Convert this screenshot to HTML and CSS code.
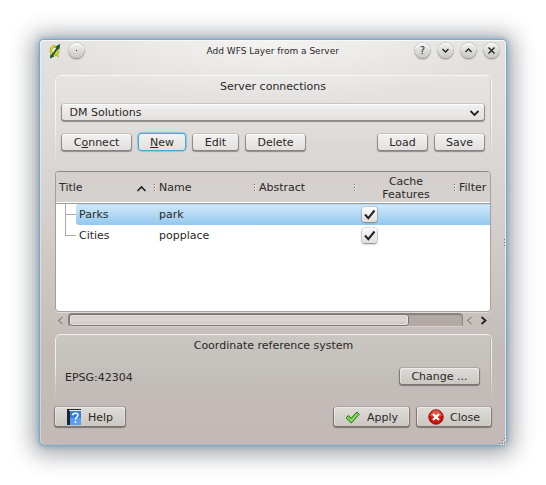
FILE: index.html
```html
<!DOCTYPE html>
<html lang="en">
<head>
<meta charset="utf-8">
<title>Add WFS Layer from a Server</title>
<link rel="stylesheet" href="styles.css">
</head>
<body>
<main class="window">
  <header class="titlebar">
    <svg class="app-icon" width="12" height="16" viewBox="0 0 12 16"><ellipse cx="5.500" cy="7.800" rx="3.600" ry="4.300" fill="#f3f2d8" stroke="#8b8a16" stroke-width="2.400"/><ellipse cx="5.500" cy="7.800" rx="3.600" ry="4.300" fill="none" stroke="#e2e12c" stroke-width="1.400"/><path d="M6.500 10l3 4" stroke="#c8c51e" stroke-width="2"/><path d="M1 15.500l.5-4 1 .4L7.700 4.600 6 4.200 11 .8l-.5 5.400-1.200-.6-5.200 7.200 1 .7z" fill="#12561f"/></svg>
    <span class="round"><i class="dot"></i></span>
    <h1>Add WFS Layer from a Server</h1>
    <span class="round"><span class="question">?</span></span>
    <span class="round"><svg width="15" height="15" viewBox="0 0 15 15"><path d="M4.500 6l3 3 3-3"/></svg></span>
    <span class="round"><svg width="15" height="15" viewBox="0 0 15 15"><path d="M4.500 9l3-3 3 3"/></svg></span>
    <span class="round"><svg width="15" height="15" viewBox="0 0 15 15"><path d="M4.500 4.500l6 6M10.500 4.500l-6 6"/></svg></span>
  </header>

  <section class="group connections">
    <h2>Server connections</h2>
    <div class="combo">DM Solutions<svg width="11" height="8" viewBox="0 0 11 8"><path d="M1.500 2l4 4 4-4" fill="none" stroke="#222" stroke-width="1.800"/></svg></div>
    <div class="row">
      <button class="btn connect">C<u>o</u>nnect</button>
      <button class="btn new"><u>N</u>ew</button>
      <button class="btn edit">Edit</button>
      <button class="btn delete">Delete</button>
      <span class="space"></span>
      <button class="btn load">Load</button>
      <button class="btn save">Save</button>
    </div>
  </section>

  <section class="table">
    <div class="cols head">
      <div class="sep">Title<svg class="sort" width="11" height="7" viewBox="0 0 11 7"><path d="M1.500 6l4-4 4 4" fill="none" stroke="#222" stroke-width="1.600"/></svg></div>
      <div class="sep">Name</div>
      <div class="sep">Abstract</div>
      <div class="sep center">Cache<br>Features</div>
      <div>Filter</div>
    </div>
    <div class="cols item selected">
      <div><i class="branch"></i>Parks</div><div>park</div><div></div>
      <div><span class="check"><svg width="15" height="15" viewBox="0 0 15 15"><path d="M3 7.500l3.300 3.600L12.500 3.500" fill="none" stroke="#222" stroke-width="2"/></svg></span></div><div></div>
    </div>
    <div class="cols item">
      <div><i class="branch last"></i>Cities</div><div>popplace</div><div></div>
      <div><span class="check"><svg width="15" height="15" viewBox="0 0 15 15"><path d="M3 7.500l3.300 3.600L12.500 3.500" fill="none" stroke="#222" stroke-width="2"/></svg></span></div><div></div>
    </div>
  </section>

  <div class="scroll">
    <svg class="arrow dim" width="7" height="9" viewBox="0 0 7 9"><path d="M5.500 1l-4 3.500 4 3.500"/></svg>
    <div class="track"><div class="thumb"></div></div>
    <svg class="arrow dim" width="7" height="9" viewBox="0 0 7 9"><path d="M5.500 1l-4 3.500 4 3.500"/></svg>
    <svg class="arrow" width="7" height="9" viewBox="0 0 7 9"><path d="M1.500 1l4 3.500-4 3.500"/></svg>
  </div>

  <section class="group crs">
    <h2>Coordinate reference system</h2>
    <div class="row"><span>EPSG:42304</span><span class="space"></span><button class="btn change">Change ...</button></div>
  </section>

  <footer class="row">
    <button class="btn big help"><svg width="14" height="16" viewBox="0 0 14 16"><path fill="#172536" d="M0 0h14v16H0z"/><path fill="#3a7fdc" d="M3 2h11v14H3z"/><path fill="#75b0f5" d="M3 9h11v7H3z" opacity=".6"/><path stroke="#e8f0fa" d="M2 1.500h12"/><path d="M5.700 6.300C5.700 3.500 11 3.500 11 6.300c0 2-2.500 2-2.500 4.200M8.500 12v2" fill="none" stroke="#fff" stroke-width="1.500"/></svg>Help</button>
    <span class="space"></span>
    <button class="btn big apply"><svg width="15" height="13" viewBox="0 0 15 13"><path d="M1 6.800l2.600-2.300 2.400 2.800L12 1l2.300 2.200L6.400 12z" fill="#71c944" stroke="#2c7720" stroke-linejoin="round"/><path d="M3 6.500l3.200 3.500L12.500 3" fill="none" stroke="#a5e67b"/></svg>Apply</button>
    <button class="btn big close"><svg width="16" height="16" viewBox="0 0 16 16"><circle cx="8" cy="8" r="7.200" fill="#cb1708" stroke="#8d0904"/><path d="M2 7a6 6 0 0 1 12 0q-6 2-12 0" fill="#ec796b" opacity=".6"/><path d="M5 5l6 6M11 5l-6 6" stroke="#fff" stroke-width="2.400"/></svg>Close</button>
  </footer>
  <i class="side-grip"></i>
  <svg class="corner-grip" width="7" height="7" viewBox="0 0 7 7"><path d="M5 0h1v1H5zM3 2h1v1H3zM5 4h1v1H5zM0 5h1v1H0zM3 5h1v1H3z" fill="#7d7472"/><path d="M6 1h1v1H6zM4 3h1v1H4zM6 5h1v1H6zM1 6h1v1H1zM4 6h1v1H4z" fill="#eee"/></svg>
</main>
</body>
</html>
```
FILE: styles.css
```css
* { box-sizing: border-box; }
body {
  margin: 0;
  padding: 40px;
  background: #fff;
  color: #2b2827;
  font: 11px/13px "DejaVu Sans", sans-serif;
}
h1, h2 { margin: 0; font-size: 11px; font-weight: normal; text-align: center; }
svg { display: block; flex: none; }
.window {
  position: relative;
  width: 466px;
  height: 405px;
  padding: 0 15px;
  border-radius: 4px 4px 5px 5px;
  background: radial-gradient(ellipse 230px 62px at 50% 0, rgba(255,255,255,.6), rgba(255,255,255,0)), linear-gradient(#e4e2e0, #dedbd9 20%, #d4cfcc 45%, #c4bcb9 76%, #c3bab7);
  box-shadow: inset 0 1px #f8f8f7, inset 1px 0 rgba(255,255,255,.35), inset -1px 0 rgba(255,255,255,.55), 0 0 1px 1px #75abc7, 0 0 5px 2px rgba(100,150,180,.5), 0 2px 22px 8px rgba(70,75,85,.48);
}
.titlebar { display: flex; height: 35px; padding: 3px 0 0; margin: 0 -8px 0 -7px; align-items: flex-start; }
.app-icon { margin: 0 8px 0 1px; }
.round {
  width: 15px; height: 15px;
  display: flex; align-items: center; justify-content: center;
  border-radius: 50%;
  background: linear-gradient(#f2f2f1, #c9c7c5);
  box-shadow: 0 0 0 .5px #aaa, 0 1px 2px #777, inset 0 1px #fff;
}
.round svg { fill: none; stroke: #222; stroke-width: 1.4; }
.round + .round { margin-left: 8px; }
.question { font-size: 10px; line-height: 15px; }
.dot { width: 1px; height: 1px; background: #222; }
.titlebar h1 { flex: 1; font-size: 9px; line-height: 16px; margin-left: 122.500px; text-align: left; white-space: nowrap; }

.group {
  position: relative;
  width: 437px;
  border-radius: 5px;
  background: linear-gradient(rgba(255,255,255,.16), rgba(255,255,255,0));
}
.group::before {
  content: "";
  position: absolute;
  inset: 0;
  border: 1px solid rgba(255,255,255,.7);
  border-bottom: 0;
  border-radius: 5px 5px 0 0;
  box-shadow: -1px 0 rgba(80,70,65,.28), 0 -1px rgba(80,70,65,.1), inset -1px 0 rgba(80,70,65,.15);
  -webkit-mask-image: linear-gradient(#000 50%, transparent);
  mask-image: linear-gradient(#000 50%, transparent);
  pointer-events: none;
}
.group h2 { padding-left: 1px; }
.connections { height: 90px; padding: 5px 8px 0 7px; }
.connections h2 { padding-left: 0; }
.combo {
  display: flex; align-items: center; justify-content: space-between;
  height: 16px; margin: 11px 0 14px; padding: 1px 4px 0 7.500px;
}
.row { display: flex; align-items: center; }
.space { flex: 1; }
.btn, .combo {
  border: 0;
  border-radius: 3px;
  color: inherit;
  background: linear-gradient(#f3f2f1, #e2e0de);
  box-shadow: inset 0 1px rgba(255,255,255,.9), 0 0 0 1px rgba(115,108,105,.15), 0 1px 1px .5px rgba(80,72,70,.55);
}
.btn { height: 16px; padding: 0; font: inherit; margin-right: 8px; }
.connect { width: 69px; }
.new { width: 46px; box-shadow: 0 0 0 1px #43a9d9, 0 0 1px 2px rgba(100,180,220,.6); }
.edit { width: 45px; }
.delete { width: 59px; }
.load { width: 49px; }
.save { width: 49px; margin-right: 0; }

.table {
  height: 141px;
  margin-top: 6px;
  width: 436px;
  padding: 1px 0 0 1px;
  overflow: hidden;
  border: 0;
  border-right: 1px solid #a8a09d;
  border-bottom: 1px solid #aaa19f;
  border-radius: 4px;
  background: #fff;
  box-shadow: inset 1px 0 #a49d99, inset 0 1px #8d8783, 0 1px rgba(255,255,255,.4);
}
.cols { display: grid; grid-template-columns: 100px 100px 100px 100px 1fr; }
.cols > div { display: flex; align-items: center; padding-left: 3px; }
.head { height: 32px; background: linear-gradient(#d4cfcc, #d6d2cf); border-bottom: 1px solid #a09a96; box-shadow: inset 0 -1px #fff; border-radius: 3px 3px 0 0; }
.head .sep { position: relative; }
.head .sep::after { content: ""; position: absolute; right: 1px; top: 12px; width: 1px; height: 9px; background: repeating-linear-gradient(#77716e 0 1px, transparent 1px 3px); box-shadow: 1px 0 rgba(255,255,255,.35); }
.head .center { justify-content: center; padding: 1px 0 0; text-align: center; }
.sort { margin: 1px 9px 0 auto; }
.item { height: 21px; }
.item > div:first-child { padding: 0; }
.branch { position: relative; flex: none; width: 20px; height: 21px; margin-right: 3px; }
.branch::before { content: ""; position: absolute; left: 9px; top: 0; width: 1px; height: 21px; background: #aaa; }
.branch::after { content: ""; position: absolute; left: 9px; top: 10px; width: 11px; height: 1px; background: #aaa; }
.branch.last::before { height: 11px; }
.selected { position: relative; z-index: 0; }
.selected::before { content: ""; position: absolute; z-index: -1; inset: 0 0 0 20px; border-radius: 3px 0 0 3px; background: linear-gradient(#d2eafb, #93c8ee); box-shadow: inset 0 1px #b6daf1; }
.check { margin-left: 3px; width: 15px; height: 15px; border-radius: 3px; background: linear-gradient(#fbfbfb, #e1dfdd); box-shadow: 0 0 0 1px rgba(120,115,112,.2), 0 1px 2px #888; }

.scroll { display: flex; align-items: center; height: 16px; padding: 0 5px 0 2px; }
.arrow { fill: none; stroke: #222; stroke-width: 1.8; margin-left: 7px; }
.dim { stroke: #8f8885; stroke-width: 1.2; margin-left: 0; }
.track { flex: none; width: 395px; height: 14px; padding: 2px; margin: 0 3px 0 4px; border: 1px solid #8d8582; border-bottom-color: #d7d1ce; border-radius: 4px; background: #b3aaa7; box-shadow: inset 0 1px 1px #857d7a; }
.thumb { width: 338px; height: 10px; margin: -1px 0 0 -1px; border-radius: 3px; background: linear-gradient(#cfcac7, #dcd7d5 50%, #c7c1be); box-shadow: 0 0 0 1px #77706d, inset 0 0 0 1px #e7e3e1; }

.crs { height: 66px; margin-top: 6px; padding: 5px 13px 0 12px; background: linear-gradient(rgba(210,214,207,.4), rgba(190,194,187,.3) 70%, rgba(190,194,187,0)); }
.crs .row { margin: 16px 0 0 -2px; }
.crs .row > span:first-child { position: relative; top: 1px; }
.change { width: 79px; margin: 0; }
.crs .btn, footer .btn { background: linear-gradient(#dedcd8, #cbc7c1); box-shadow: inset 0 1px #eeeceb, inset 1px 0 rgba(255,255,255,.4), inset -1px 0 rgba(255,255,255,.3), 0 0 0 1px rgba(125,115,112,.25), 0 1px 1px .5px rgba(80,72,70,.6); }
footer { margin-top: 7px; }
footer .btn { display: flex; align-items: center; height: 19px; gap: 7px; padding-top: 1px; }
.help { width: 70px; padding-left: 12px; }
.apply { width: 75px; padding-left: 12px; }
.close { width: 74px; padding-left: 11px; margin-right: 0; }
footer .close { gap: 6px; }
footer .apply { padding-left: 11px; }
.side-grip { position: absolute; right: 1px; top: 199px; width: 1px; height: 7px; background: repeating-linear-gradient(#777 0 1px, transparent 1px 3px); }
.corner-grip { position: absolute; right: 0; bottom: 0; }
```
